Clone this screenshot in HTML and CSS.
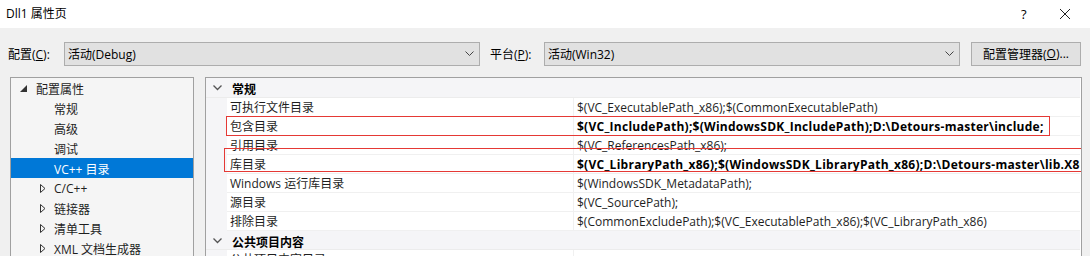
FILE: index.html
```html
<!DOCTYPE html>
<html>
<head>
<meta charset="utf-8">
<link rel="stylesheet" href="styles.css">
</head>
<body>
<div class="titlebar">
  <span class="title">Dll1 属性页</span>
  <span class="tb-help">?</span>
  <span class="tb-close"><svg width="12" height="12" viewBox="0 0 12 12"><path d="M1 1 L11 11 M11 1 L1 11" stroke="#222" stroke-width="1" fill="none"/></svg></span>
</div>
<div class="toolbar">
  <span class="lbl lbl-config">配置(<u>C</u>):</span>
  <div class="combo combo-config"><span>活动(Debug)</span><svg class="chev" width="9" height="6" viewBox="0 0 9 6"><path d="M0.5 0.5 L4.5 4.5 L8.5 0.5" stroke="#444" stroke-width="1" fill="none"/></svg></div>
  <span class="lbl lbl-plat">平台(<u>P</u>):</span>
  <div class="combo combo-plat"><span>活动(Win32)</span><svg class="chev" width="9" height="6" viewBox="0 0 9 6"><path d="M0.5 0.5 L4.5 4.5 L8.5 0.5" stroke="#444" stroke-width="1" fill="none"/></svg></div>
  <div class="btn">配置管理器(<u>O</u>)...</div>
</div>
<div class="main">
  <div class="tree">
    <div class="node lvl0"><span class="exp"><svg width="7" height="7" viewBox="0 0 7 7"><path d="M7 0 L7 7 L0 7 Z" fill="#333"/></svg></span>配置属性</div>
    <div class="node lvl1">常规</div>
    <div class="node lvl1">高级</div>
    <div class="node lvl1">调试</div>
    <div class="node lvl1 sel">VC++ 目录</div>
    <div class="node lvl1c"><span class="col"><svg width="6" height="9" viewBox="0 0 6 9"><path d="M0.5 0.5 L5 4.5 L0.5 8.5 Z" stroke="#333" fill="none"/></svg></span>C/C++</div>
    <div class="node lvl1c"><span class="col"><svg width="6" height="9" viewBox="0 0 6 9"><path d="M0.5 0.5 L5 4.5 L0.5 8.5 Z" stroke="#333" fill="none"/></svg></span>链接器</div>
    <div class="node lvl1c"><span class="col"><svg width="6" height="9" viewBox="0 0 6 9"><path d="M0.5 0.5 L5 4.5 L0.5 8.5 Z" stroke="#333" fill="none"/></svg></span>清单工具</div>
    <div class="node lvl1c"><span class="col"><svg width="6" height="9" viewBox="0 0 6 9"><path d="M0.5 0.5 L5 4.5 L0.5 8.5 Z" stroke="#333" fill="none"/></svg></span>XML 文档生成器</div>
  </div>
  <div class="grid">
    <div class="cat"><span class="cchev"><svg width="9" height="6" viewBox="0 0 9 6"><path d="M0.5 0.5 L4.5 4.5 L8.5 0.5" stroke="#555" stroke-width="1.3" fill="none"/></svg></span><b>常规</b></div>
    <div class="row"><span class="gut"></span><span class="name">可执行文件目录</span><span class="val">$(VC_ExecutablePath_x86);$(CommonExecutablePath)</span></div>
    <div class="row"><span class="gut"></span><span class="name">包含目录</span><span class="val bold">$(VC_IncludePath);$(WindowsSDK_IncludePath);D:\Detours-master\include;</span></div>
    <div class="row"><span class="gut"></span><span class="name">引用目录</span><span class="val">$(VC_ReferencesPath_x86);</span></div>
    <div class="row"><span class="gut"></span><span class="name">库目录</span><span class="val bold">$(VC_LibraryPath_x86);$(WindowsSDK_LibraryPath_x86);D:\Detours-master\lib.X86</span></div>
    <div class="row"><span class="gut"></span><span class="name">Windows 运行库目录</span><span class="val">$(WindowsSDK_MetadataPath);</span></div>
    <div class="row"><span class="gut"></span><span class="name">源目录</span><span class="val">$(VC_SourcePath);</span></div>
    <div class="row"><span class="gut"></span><span class="name">排除目录</span><span class="val">$(CommonExcludePath);$(VC_ExecutablePath_x86);$(VC_LibraryPath_x86)</span></div>
    <div class="cat"><span class="cchev"><svg width="9" height="6" viewBox="0 0 9 6"><path d="M0.5 0.5 L4.5 4.5 L8.5 0.5" stroke="#555" stroke-width="1.3" fill="none"/></svg></span><b>公共项目内容</b></div>
    <div class="row last"><span class="gut"></span><span class="name">公共项目内容目录</span><span class="val"></span></div>
    <div class="mark mark1"></div>
    <div class="mark mark2"></div>
  </div>
</div>
</body>
</html>
```

FILE: styles.css
```css
* { box-sizing: border-box; }
html, body { margin: 0; padding: 0; }
body {
  width: 1090px;
  height: 256px;
  overflow: hidden;
  background: #f0f0f0;
  font-family: "Open Sans", "Noto Sans CJK SC", sans-serif;
  font-size: 12px;
  color: #000;
}
.titlebar {
  height: 28px;
  background: #fff;
  display: flex;
  align-items: center;
}
.title { margin-left: 6px; margin-top: -3px; }
.tb-help { margin-left: auto; width: 12px; margin-right: 26px; font-size: 13px; }
.tb-close { margin-right: 19px; display: flex; }
.toolbar {
  display: flex;
  align-items: center;
  height: 49px;
  padding-top: 2px;
}
.lbl { white-space: nowrap; }
.lbl-config { margin-left: 8px; width: 56px; }
.lbl-plat { margin-left: 10px; width: 54px; }
.combo {
  height: 24px;
  background: #e1e1e1;
  border: 1px solid #adadad;
  display: flex;
  align-items: center;
  padding-left: 3px;
  padding-right: 5px;
}
.combo span { flex: 1; }
.combo-config { width: 416px; }
.combo-plat { width: 416px; }
.btn {
  margin-left: 11px;
  width: 110px;
  height: 24px;
  background: #e1e1e1;
  border: 1px solid #adadad;
  display: flex;
  align-items: center;
  justify-content: center;
}
.main {
  display: flex;
  padding-left: 10px;
  gap: 11px;
}
.tree {
  width: 184px;
  height: 179px;
  background: #f5f5f5;
  border: 1px solid #a0a0a0;
  border-bottom: none;
}
.node {
  height: 20px;
  padding-top: 1px;
  display: flex;
  align-items: center;
  color: #1e1e1e;
  white-space: nowrap;
}
.lvl0 { padding-left: 9px; }
.exp { width: 16px; display: flex; align-items: center; }
.lvl1 { padding-left: 43px; }
.lvl1c { padding-left: 29px; }
.col { width: 14px; display: flex; align-items: center; }
.sel { background: #0078d7; color: #fff; }
.grid {
  position: relative;
  width: 877px;
  height: 179px;
  overflow: hidden;
  background: #fff;
  border: 1px solid #a0a0a0;
  border-bottom: none;
  padding-right: 1px;
}
.cat {
  height: 20px;
  padding-top: 3px;
  background: #f5f5f7;
  display: flex;
  align-items: center;
  border-bottom: 1px solid #ececec;
}
.cat b { font-weight: bold; }
.cat + .row { }
.grid .cat:not(:first-child) { height: 19px; }
.cchev { width: 26px; padding-left: 7px; display: flex; align-items: center; margin-top: -2px; }
.row {
  display: grid;
  grid-template-columns: 21px 347px 1fr;
  height: 19px;
}
.gut { background: #f5f5f7; }
.name, .val {
  padding-top: 2px;
  line-height: 16px;
  border-bottom: 1px solid #f0f0f0;
  white-space: nowrap;
  overflow: hidden;
  color: #1e1e1e;
}
.name { padding-left: 3px; border-right: 1px solid #f0f0f0; }
.val { padding-left: 3px; }
.bold { font-weight: bold; color: #000; letter-spacing: 0.26px; }
.mark { position: absolute; border: 1px solid #e53935; }
.mark1 { left: 20px; top: 38px; width: 824px; height: 20px; }
.mark2 { left: 18px; top: 70px; width: 862px; height: 24px; }
```
